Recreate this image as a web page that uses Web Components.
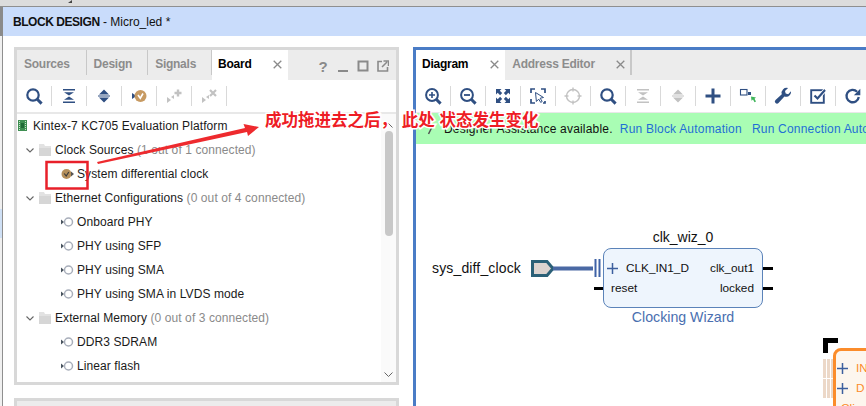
<!DOCTYPE html>
<html>
<head>
<meta charset="utf-8">
<title>Block Design</title>
<style>
    html, body { margin: 0; width: 866px; height: 406px; overflow: hidden; background: #fff; }
    body { font-family: "Liberation Sans", Arial, sans-serif; font-size: 12px; color: #1a1a1a; position: relative; }
    .count { color: #8a8a8a; }
    a { color: #1f6fd6; text-decoration: none; margin-left: 3.5px; }
    a + a { margin-left: 6.5px; }
    vd-work { height: 370px; }
    vd-titlebar b { letter-spacing: -.45px; }
</style>
</head>
<body>
<vd-topstrip></vd-topstrip>
<vd-titlebar><span><b>BLOCK DESIGN</b> - Micro_led *</span></vd-titlebar>
<vd-work>
    <vd-column>
        <vd-panel style="height:338px">
            <vd-tabstrip slot="tabs">
                <vd-tab label="Sources"></vd-tab>
                <vd-tab label="Design"></vd-tab>
                <vd-tab label="Signals"></vd-tab>
                <vd-tab label="Board" active closable></vd-tab>
                <vd-winbtns></vd-winbtns>
            </vd-tabstrip>
            <vd-toolbar slot="tools">
                <vd-tool icon="search"></vd-tool>
                <vd-tool icon="collapse"></vd-tool>
                <vd-tool icon="expand"></vd-tool>
                <vd-tool icon="auto"></vd-tool>
                <vd-tool icon="addconn" off></vd-tool>
                <vd-tool icon="delconn" off></vd-tool>
            </vd-toolbar>
            <vd-tree>
                <vd-row kind="root">Kintex-7 KC705 Evaluation Platform</vd-row>
                <vd-row kind="group">Clock Sources <span class="count">(1 out of 1 connected)</span></vd-row>
                <vd-row kind="done">System differential clock</vd-row>
                <vd-row kind="group">Ethernet Configurations <span class="count">(0 out of 4 connected)</span></vd-row>
                <vd-row kind="leaf">Onboard PHY</vd-row>
                <vd-row kind="leaf">PHY using SFP</vd-row>
                <vd-row kind="leaf">PHY using SMA</vd-row>
                <vd-row kind="leaf">PHY using SMA in LVDS mode</vd-row>
                <vd-row kind="group">External Memory <span class="count">(0 out of 3 connected)</span></vd-row>
                <vd-row kind="leaf">DDR3 SDRAM</vd-row>
                <vd-row kind="leaf">Linear flash</vd-row>
            </vd-tree>
        </vd-panel>
        <vd-panel style="height:40px"></vd-panel>
    </vd-column>
    <vd-panel accent style="width:470px;height:380px;flex:none">
        <vd-tabstrip slot="tabs">
            <vd-tab label="Diagram" active closable></vd-tab>
            <vd-tab label="Address Editor" closable edge></vd-tab>
        </vd-tabstrip>
        <vd-toolbar slot="tools" thin>
            <vd-tool icon="zoomin"></vd-tool>
            <vd-tool icon="zoomout"></vd-tool>
            <vd-tool icon="fit"></vd-tool>
            <vd-tool icon="select"></vd-tool>
            <vd-tool icon="target" off></vd-tool>
            <vd-tool icon="search"></vd-tool>
            <vd-tool icon="collapse" off></vd-tool>
            <vd-tool icon="expand" off></vd-tool>
            <vd-tool icon="plus"></vd-tool>
            <vd-tool icon="regen"></vd-tool>
            <vd-tool icon="wrench"></vd-tool>
            <vd-tool icon="check"></vd-tool>
            <vd-tool icon="refresh"></vd-tool>
        </vd-toolbar>
        <vd-assist>Designer Assistance available. <a href="#">Run Block Automation</a> <a href="#">Run Connection Automation</a></vd-assist>
        <vd-diagram>
            <vd-block name="clk_wiz_0" type="Clocking Wizard" style="left:187px;top:104px;width:160px;height:60px">
                <vd-pin plus right="clk_out1">CLK_IN1_D</vd-pin>
                <vd-pin right="locked">reset</vd-pin>
            </vd-block>
            <vd-block hot style="left:417px;top:204px;width:100px;height:100px">
                <vd-pin plus>IN</vd-pin>
                <vd-pin plus>D</vd-pin>
                <vd-pin>Cli</vd-pin>
            </vd-block>
        </vd-diagram>
    </vd-panel>
</vd-work>
<vd-callout>成功拖进去之后， 此处 状态发生变化</vd-callout>

<script>
const NAVY = '#2f4f82';
const OFF = '#c2c2c2';

const icons = {
    search: c => `<circle cx="9" cy="9" r="5.7" fill="none" stroke="${c}" stroke-width="2.2"/><path d="M13 13l4.6 4.6" stroke="${c}" stroke-width="3"/>`,
    zoomin: c => `<circle cx="9" cy="9" r="5.9" fill="none" stroke="${c}" stroke-width="2"/><path d="M13.2 13.2l4.4 4.4" stroke="${c}" stroke-width="3"/><path d="M6 9h6M9 6v6" stroke="${c}" stroke-width="1.6"/>`,
    zoomout: c => `<circle cx="9" cy="9" r="5.9" fill="none" stroke="${c}" stroke-width="2"/><path d="M13.2 13.2l4.4 4.4" stroke="${c}" stroke-width="3"/><path d="M6 9h6" stroke="${c}" stroke-width="1.8"/>`,
    collapse: c => `<path d="M4 3h12v1.6H4zM5 6.2h10L10 9.6zM5 13.8h10l-5-3.4zM4 15.4h12V17H4z" fill="${c}"/>`,
    expand: c => `<path d="M5 8.6L10 3.4l5 5.2zM4 9.4h12v1.2H4zM5 11.4h10l-5 5.2z" fill="${c}"/>`,
    auto: c => `<path d="M3 7l4.5 3L3 13z" fill="${NAVY}"/><circle cx="11.5" cy="10" r="6" fill="#c79a62"/><path d="M9 9l2.3 3.2L14 7.5" fill="none" stroke="#fff" stroke-width="1.6"/>`,
    addconn: c => `<path d="M3 11l4 3-4 3zM7 11l3-2 0 4z" fill="${c}"/><path d="M14 3.5v7M10.5 7h7" stroke="${c}" stroke-width="2.4"/>`,
    delconn: c => `<path d="M3 11l4 3-4 3zM7 11l3-2 0 4z" fill="${c}"/><path d="M11 4l6 6M17 4l-6 6" stroke="${c}" stroke-width="2.2"/>`,
    fit: c => `<g fill="${c}"><path d="M3 3h5.500L6.800 4.700l2.400 2.400-2.100 2.100-2.400-2.400L3 8.500z"/><path d="M17 3v5.500l-1.700-1.700-2.400 2.400-2.100-2.100 2.400-2.400L11.500 3z"/><path d="M3 17v-5.500l1.700 1.700 2.400-2.400 2.100 2.100-2.400 2.400L8.500 17z"/><path d="M17 17h-5.500l1.700-1.700-2.400-2.400 2.100-2.100 2.400 2.400 1.700-1.700z"/></g>`,
    select: c => `<path d="M3 7V3h4M13 3h4v4M3 13v4h4M17 15v2h-2" fill="none" stroke="${c}" stroke-width="1.7"/><path d="M7.5 6.500l8 5-3.300.7 2 3.300-1.500.9-2-3.300-2.300 2.400z" fill="#fff" stroke="${c}" stroke-width="1"/>`,
    target: c => `<circle cx="10" cy="10" r="6.500" fill="none" stroke="${c}" stroke-width="1.400"/><path d="M10 1.500v4M10 14.500v4M1.500 10h4M14.500 10h4" stroke="${c}" stroke-width="1.400"/>`,
    plus: c => `<path d="M10 2.500v15M2.500 10h15" stroke="${c}" stroke-width="3"/>`,
    regen: c => `<rect x="2.500" y="3.500" width="6.500" height="5.500" fill="#fff" stroke="${c}" stroke-width="1.100"/><rect x="10" y="6" width="3" height="3" fill="${c}"/><path d="M13 10.500l5 1-1.500 1.200 1.500 2.800-1.500.8-1.500-2.800-1.500 1.200z" fill="#3fb55a"/>`,
    wrench: c => `<path d="M18 5.200a5 5 0 0 1-6.600 5.300L5.500 17a2.100 2.100 0 0 1-3-3l6.300-5.800a5 5 0 0 1 6.300-6.100L12 5.100l.7 2.500 2.500.7z" fill="${c}"/>`,
    check: c => `<rect x="3.200" y="4.200" width="12.600" height="12.600" fill="none" stroke="${c}" stroke-width="1.900"/><path d="M6.500 9.500l3 3 7.500-8.500" fill="none" stroke="#fff" stroke-width="4"/><path d="M6.500 9.500l3 3 7.500-8.500" fill="none" stroke="${c}" stroke-width="2.200"/>`,
    refresh: c => `<path d="M15.800 11a6.200 6.200 0 1 1-1.700-5.300" fill="none" stroke="${c}" stroke-width="2.300"/><path d="M17.300 2.800v6.400h-6.400z" fill="${c}"/>`
};

class vdTopstrip extends HTMLElement {
    constructor() {
        super();
        this.attachShadow({ mode: 'open' });
    }
    connectedCallback() {
        this.shadowRoot.innerHTML = `
            <style>
                :host { display: block; height: 6px; background: #dcdcdc; border-bottom: 1px solid #8f8f8f; position: relative; }
                div { position: absolute; left: 68px; top: 0; width: 0; height: 0; border-left: 4px solid transparent; border-bottom: 3px solid #444; }
            </style>
            <div></div>
        `;
    }
}

class vdTitlebar extends HTMLElement {
    constructor() {
        super();
        this.attachShadow({ mode: 'open' });
    }
    connectedCallback() {
        this.shadowRoot.innerHTML = `
            <style>
                :host {
                    display: flex; align-items: center; height: 29px; padding-left: 13px;
                    background: linear-gradient(to right, #8a8a8a 3px, #c9dcfb 3px);
                    font-size: 12px; color: #111;
                }
            </style>
            <slot></slot>
        `;
    }
}

class vdWork extends HTMLElement {
    constructor() {
        super();
        this.attachShadow({ mode: 'open' });
    }
    connectedCallback() {
        this.shadowRoot.innerHTML = `
            <style>
                :host {
                    display: flex; gap: 14px; padding: 11px 0 0 14px; overflow: hidden; position: relative;
                    background: linear-gradient(to right, #f0f0f0 2px, #8f8f8f 2px, #8f8f8f 3px, #fff 3px);
                }
                :host::before { content: ""; position: absolute; left: 0; top: 173px; width: 2px; height: 29px; background: #cfe0f5; }
            </style>
            <slot></slot>
        `;
    }
}

class vdColumn extends HTMLElement {
    constructor() {
        super();
        this.attachShadow({ mode: 'open' });
    }
    connectedCallback() {
        this.shadowRoot.innerHTML = `
            <style>
                :host { display: flex; flex-direction: column; gap: 13px; width: 385px; flex: none; }
            </style>
            <slot></slot>
        `;
    }
}

class vdPanel extends HTMLElement {
    constructor() {
        super();
        this.attachShadow({ mode: 'open' });
    }
    connectedCallback() {
        this.shadowRoot.innerHTML = `
            <style>
                :host {
                    display: flex; flex-direction: column; box-sizing: border-box;
                    border: 3px solid #d8d8d8; background: #ececec; overflow: hidden; flex: none;
                }
                :host([accent]) { border-color: #4a7cc6; border-right: 0; border-bottom: 0; background: #fff; }
                .body { flex: 1; min-height: 0; display: flex; flex-direction: column; }
            </style>
            <slot name="tabs"></slot>
            <slot name="tools"></slot>
            <div class="body"><slot></slot></div>
        `;
    }
}

class vdTabstrip extends HTMLElement {
    constructor() {
        super();
        this.attachShadow({ mode: 'open' });
    }
    connectedCallback() {
        this.shadowRoot.innerHTML = `
            <style>
                :host { display: flex; height: 30px; background: #ececec; flex: none; }
            </style>
            <slot></slot>
        `;
    }
}

class vdTab extends HTMLElement {
    constructor() {
        super();
        this.attachShadow({ mode: 'open' });
    }
    connectedCallback() {
        const closable = this.hasAttribute('closable');
        this.shadowRoot.innerHTML = `
            <style>
                :host {
                    display: flex; align-items: center; height: 30px; box-sizing: border-box;
                    padding: 0 16px 2px 7px; font-weight: bold; font-size: 12px; color: #8c8c8c;
                    letter-spacing: -.25px; position: relative; flex: none;
                }
                :host(:first-child) { padding-right: 17px; }
                :host([active]) { background: #fff; color: #000; padding-left: 6px; }
                :host([closable]) { padding-right: 6px; }
                :host::after { content: ""; position: absolute; right: 0; top: 0; width: 1px; height: 25px; background: #c8c8c8; }
                :host([active])::after { display: none; }
                :host([edge])::after { width: 2px; right: -1px; }
                svg { margin-left: 22px; margin-top: 1px; display: block; }
                :host([edge]) svg { margin-left: 21px; }
            </style>
            <span>${this.getAttribute('label')}</span>
            ${closable ? `<svg width="9" height="9" viewBox="0 0 9 9"><path d="M.7.7l7.600 7.600M8.300.7L.7 8.300" stroke="#8a8a8a" stroke-width="1.300"/></svg>` : ''}
        `;
    }
}

class vdWinbtns extends HTMLElement {
    constructor() {
        super();
        this.attachShadow({ mode: 'open' });
    }
    connectedCallback() {
        this.shadowRoot.innerHTML = `
            <style>
                :host { display: flex; align-items: center; margin-left: auto; padding-right: 3px; padding-top: 2px; gap: 0; }
                span { width: 20px; display: flex; justify-content: center; }
                b { font-size: 15px; color: #8a8a8a; }
            </style>
            <span><b>?</b></span>
            <span><svg width="12" height="12"><path d="M1 11h10" stroke="#8a8a8a" stroke-width="2"/></svg></span>
            <span><svg width="12" height="12"><rect x="1.500" y="1.500" width="9" height="9" fill="none" stroke="#8a8a8a" stroke-width="2"/></svg></span>
            <span><svg width="12" height="12"><path d="M5 1.500H1v9.500h9.500V7" fill="none" stroke="#8a8a8a" stroke-width="1.600"/><path d="M5 7l5-5M6.500 1h5v5" fill="none" stroke="#8a8a8a" stroke-width="1.500"/></svg></span>
        `;
    }
}

class vdToolbar extends HTMLElement {
    constructor() {
        super();
        this.attachShadow({ mode: 'open' });
    }
    connectedCallback() {
        this.shadowRoot.innerHTML = `
            <style>
                :host { display: flex; height: 32px; background: #fff; flex: none; border-bottom: 2px solid #e8e8e8; }
                :host([thin]) { border-bottom-width: 1px; }
            </style>
            <slot></slot>
        `;
    }
}

class vdTool extends HTMLElement {
    constructor() {
        super();
        this.attachShadow({ mode: 'open' });
    }
    connectedCallback() {
        const color = this.hasAttribute('off') ? OFF : NAVY;
        const draw = icons[this.getAttribute('icon')];
        this.shadowRoot.innerHTML = `
            <style>
                :host { display: flex; align-items: center; justify-content: center; width: 35px; height: 32px; flex: none; position: relative; padding-right: 1px; box-sizing: border-box; }
                :host::after { content: ""; position: absolute; right: 0; top: 6px; height: 20px; width: 1px; background: #d9d9d9; }
                :host([icon="refresh"])::after { display: none; }
            </style>
            <svg width="20" height="20" viewBox="0 0 20 20">${draw(color)}</svg>
        `;
    }
}

class vdTree extends HTMLElement {
    constructor() {
        super();
        this.attachShadow({ mode: 'open' });
    }
    connectedCallback() {
        this.shadowRoot.innerHTML = `
            <style>
                :host { display: flex; flex: 1; min-height: 0; background: #fff; }
                .list { flex: 1; overflow: hidden; margin-top: -1px; }
                .bar { width: 15px; flex: none; background: #fafafa; display: flex; flex-direction: column; align-items: center; }
                .thumb { width: 8px; height: 105px; border-radius: 4px; background: #c8c8c8; margin-top: 3px; }
                svg { flex: none; display: block; }
                .up { margin-top: 9px; }
                .down { margin-top: auto; margin-bottom: 5px; }
            </style>
            <div class="list"><slot></slot></div>
            <div class="bar">
                <svg class="up" width="9" height="5"><path d="M.5 4.500l4-4 4 4" fill="none" stroke="#666"/></svg>
                <div class="thumb"></div>
                <svg class="down" width="9" height="5"><path d="M.5.5l4 4 4-4" fill="none" stroke="#666"/></svg>
            </div>
        `;
    }
}

class vdRow extends HTMLElement {
    constructor() {
        super();
        this.attachShadow({ mode: 'open' });
    }
    getIcon() {
        const kind = this.getAttribute('kind');
        if (kind === 'root') {
            return `<svg width="9" height="11" style="margin-left:1px;margin-right:6px"><rect width="9" height="11" fill="#3f8f52"/><path d="M1.500 1v9M7.500 1v9" stroke="#c7e6cc" stroke-dasharray="1 1"/><rect x="3" y="3" width="3" height="5" fill="#1f6a35"/></svg>`;
        }
        if (kind === 'group') {
            return `<svg width="8" height="5" style="margin-left:9px;margin-right:5px"><path d="M.5.5l3.500 3.500 3.500-3.500" fill="none" stroke="#666" stroke-width="1.100"/></svg>
                <svg width="12" height="12" style="margin-right:4px"><path d="M0 0h5l1 2h6v10H0z" fill="#e2e2e2"/><path d="M0 4h12v8H0z" fill="#d6d6d6"/></svg>`;
        }
        if (kind === 'done') {
            return `<svg width="13" height="12" style="margin-left:44px;margin-right:3px"><circle cx="5.500" cy="6" r="5" fill="#b58f5a"/><path d="M3.200 5.500l2 2.500 2.600-4" fill="none" stroke="#3a3a3a" stroke-width="1.200"/><path d="M10 3.500l3 2.500-3 2.500z" fill="#555"/></svg>`;
        }
        return `<svg width="13" height="12" style="margin-left:44px;margin-right:3px"><path d="M0 3.500l3 2.500-3 2.500z" fill="#4a5560"/><circle cx="7.500" cy="6" r="4" fill="#fff" stroke="#a8aeba" stroke-width="1.500"/></svg>`;
    }
    connectedCallback() {
        this.shadowRoot.innerHTML = `
            <style>
                :host { display: flex; align-items: center; height: 24px; font-size: 12px; letter-spacing: .09px; white-space: nowrap; color: #1a1a1a; }
                :host([kind="root"]) { height: 25px; }
            </style>
            ${this.getIcon()}
            <span><slot></slot></span>
        `;
    }
}

class vdAssist extends HTMLElement {
    constructor() {
        super();
        this.attachShadow({ mode: 'open' });
    }
    connectedCallback() {
        this.shadowRoot.innerHTML = `
            <style>
                :host {
                    display: flex; align-items: center; height: 31px; background: #a9fdb4; color: #111;
                    font-size: 12px; letter-spacing: .2px; white-space: nowrap; flex: none;
                }
                svg { margin-left: 11px; margin-right: 9px; flex: none; }
            </style>
            <svg width="8" height="12"><path d="M1.500 11L6 2" stroke="#555" stroke-width="1.500"/></svg>
            <span><slot></slot></span>
        `;
    }
}

class vdDiagram extends HTMLElement {
    constructor() {
        super();
        this.attachShadow({ mode: 'open' });
    }
    connectedCallback() {
        this.shadowRoot.innerHTML = `
            <style>
                :host { display: block; flex: 1; position: relative; background: #fff; overflow: hidden; font-size: 13px; color: #111; }
                svg { position: absolute; left: 0; top: 0; }
                .label { position: absolute; left: 16px; top: 116px; font-size: 14px; letter-spacing: .15px; white-space: nowrap; }
            </style>
            <svg width="470" height="262">
                <path d="M116.500 117.500h14.500l6 7-6 7h-14.500z" fill="#dcd3cf" stroke="#2b6077" stroke-width="3"/>
                <path d="M137 124.500h40" stroke="#4a69a4" stroke-width="4"/>
                <path d="M179.500 115v18M183.500 115v18" stroke="#3f62a6" stroke-width="2"/>
                <path d="M178 144.500h9M347 124.500h10M347 144.500h10" stroke="#000" stroke-width="3"/>
                <path d="M409.500 209v-12.500h12.500" fill="none" stroke="#000" stroke-width="5"/>
                <g fill="#ecd8c8">
                    <rect x="407" y="215" width="3" height="19"/><rect x="411" y="215" width="3" height="19"/><rect x="415" y="215" width="2" height="19"/>
                    <rect x="407" y="235" width="3" height="19"/><rect x="411" y="235" width="3" height="19"/><rect x="415" y="235" width="2" height="19"/>
                </g>
            </svg>
            <span class="label">sys_diff_clock</span>
            <slot></slot>
        `;
    }
}

class vdBlock extends HTMLElement {
    constructor() {
        super();
        this.attachShadow({ mode: 'open' });
    }
    connectedCallback() {
        const name = this.getAttribute('name');
        const type = this.getAttribute('type');
        this.shadowRoot.innerHTML = `
            <style>
                :host {
                    display: block; position: absolute; box-sizing: border-box;
                    border: 1px solid #5b83b9; border-radius: 8px; background: #eef5fd;
                }
                :host([hot]) { border: 3px solid #fb8c2b; background: #fdf6ee; color: #fb8c2b; }
                .name, .type { position: absolute; left: -20px; right: -20px; text-align: center; white-space: nowrap; }
                .name { top: -20px; font-size: 14px; color: #111; }
                .type { bottom: -18px; font-size: 14.2px; color: #4a6fb0; }
                .pins { display: flex; flex-direction: column; padding-top: 9px; }
                :host([hot]) .pins { padding-top: 7px; margin-left: -2px; }
            </style>
            ${name ? `<div class="name">${name}</div>` : ''}
            <div class="pins"><slot></slot></div>
            ${type ? `<div class="type">${type}</div>` : ''}
        `;
    }
}

class vdPin extends HTMLElement {
    constructor() {
        super();
        this.attachShadow({ mode: 'open' });
    }
    connectedCallback() {
        const plus = this.hasAttribute('plus');
        const right = this.getAttribute('right');
        this.shadowRoot.innerHTML = `
            <style>
                :host { display: flex; align-items: center; height: 20px; padding: 0 8px 0 7px; font-size: 11.8px; white-space: nowrap; }
                svg { margin-left: -4px; margin-right: 8px; flex: none; }
                .right { margin-left: auto; }
            </style>
            ${plus ? `<svg width="11" height="11"><path d="M5.500 0v11M0 5.500h11" stroke="#3c5f9e" stroke-width="1.500"/></svg>` : ''}
            <span><slot></slot></span>
            ${right ? `<span class="right">${right}</span>` : ''}
        `;
    }
}

class vdCallout extends HTMLElement {
    constructor() {
        super();
        this.attachShadow({ mode: 'open' });
    }
    connectedCallback() {
        this.shadowRoot.innerHTML = `
            <style>
                :host { position: absolute; left: 0; top: 0; width: 866px; height: 406px; pointer-events: none; display: block; }
                svg { position: absolute; left: 0; top: 0; }
                .text {
                    position: absolute; left: 265px; top: 107px; white-space: pre; word-spacing: 1px;
                    font: bold 16.5px "Noto Sans CJK SC", "Liberation Sans", sans-serif; line-height: 24px; color: #ee1c25;
                    -webkit-text-stroke: 3px #fff; paint-order: stroke fill;
                }
            </style>
            <svg width="866" height="406">
                <rect x="46.500" y="162" width="41" height="26.500" fill="none" stroke="#e8202a" stroke-width="2.500"/>
                <path d="M97 162l148-34-1.500-4 15.500 3-11 9-1-4-149 32z" fill="#ee2a2e"/>
            </svg>
            <div class="text"><slot></slot></div>
        `;
    }
}

customElements.define('vd-topstrip', vdTopstrip);
customElements.define('vd-titlebar', vdTitlebar);
customElements.define('vd-work', vdWork);
customElements.define('vd-column', vdColumn);
customElements.define('vd-panel', vdPanel);
customElements.define('vd-tabstrip', vdTabstrip);
customElements.define('vd-tab', vdTab);
customElements.define('vd-winbtns', vdWinbtns);
customElements.define('vd-toolbar', vdToolbar);
customElements.define('vd-tool', vdTool);
customElements.define('vd-tree', vdTree);
customElements.define('vd-row', vdRow);
customElements.define('vd-assist', vdAssist);
customElements.define('vd-diagram', vdDiagram);
customElements.define('vd-block', vdBlock);
customElements.define('vd-pin', vdPin);
customElements.define('vd-callout', vdCallout);
</script>
</body>
</html>
